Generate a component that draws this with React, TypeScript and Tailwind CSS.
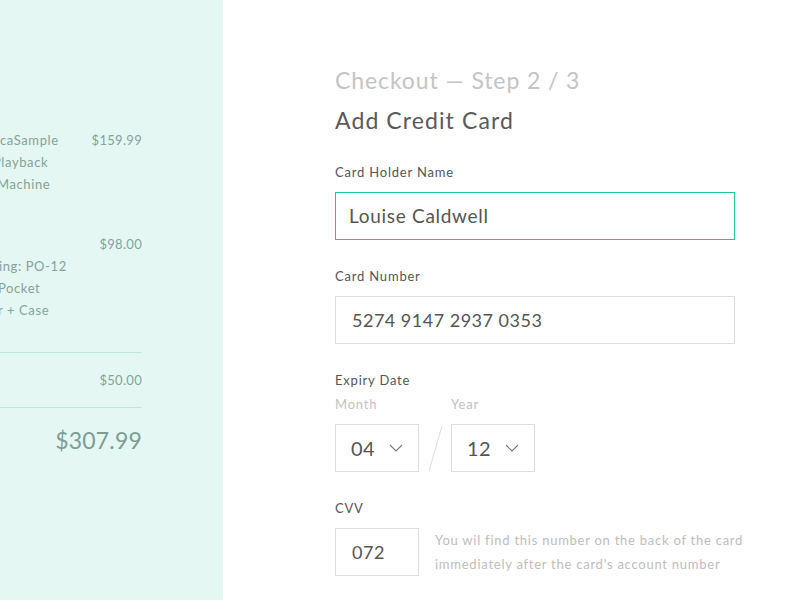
import React from "react";

const font = { fontFamily: "Lato, 'Open Sans', sans-serif" };

const Chevron = () => (
  <svg width="14" height="8" viewBox="0 0 14 8" fill="none">
    <polyline points="1,1 7,7 13,1" stroke="#7a7a7a" strokeWidth="1.1" />
  </svg>
);

const Select = ({ value }: { value: string }) => (
  <div className="flex h-12 w-[84px] items-center justify-between border border-[#dedede] pl-[15px] pr-[15px] text-[20px] tracking-[0.5px] text-[#555]">
    <span>{value}</span>
    <Chevron />
  </div>
);

const App = () => {
  return (
    <div className="flex h-screen w-full bg-white" style={font}>
      <aside className="w-[223px] shrink-0 overflow-hidden bg-[#e4f7f2] pr-[81px] pt-[129px] text-[13px] leading-[22px] tracking-[0.3px] text-[#84a39a]">
        <div className="flex justify-between">
          <div className="tracking-[0.6px]">
            <div className="whitespace-nowrap">caSample</div>
            <div className="-ml-[7px] whitespace-nowrap">Playback</div>
            <div className="-ml-[3px] whitespace-nowrap">Machine</div>
          </div>
          <span>$159.99</span>
        </div>
        <div className="mt-[38px] flex justify-between">
          <div className="tracking-[0.6px]">
            <div className="h-[22px]" />
            <div className="-ml-[1px] whitespace-nowrap">ing: PO-12</div>
            <div className="-ml-[2px] whitespace-nowrap">Pocket</div>
            <div className="-ml-[2px] whitespace-nowrap">r + Case</div>
          </div>
          <span>$98.00</span>
        </div>
        <div className="mt-[31px] border-t border-[#bfe5da] py-4 text-right">$50.00</div>
        <div className="border-t border-[#bfe5da] pt-[18px] text-right text-[23px] leading-[28px] tracking-[0.2px] text-[#7c9d93]">
          $307.99
        </div>
      </aside>

      <main className="flex-1 pl-[112px] pt-[66px] tracking-[0.8px]">
        <h2 className="text-[23px] leading-[28px] tracking-[0.9px] text-[#c4c4c4]">Checkout — Step 2 / 3</h2>
        <h1 className="mt-3 text-[23px] leading-[28px] tracking-[1.1px] text-[#5a5a5a]">Add Credit Card</h1>

        <label className="mt-7 block text-[13px] leading-5 text-[#555]">Card Holder Name</label>
        <div className="mt-[10px] flex h-12 w-[400px] items-center border border-[#1ec7a2] px-[13px] text-[19px] tracking-[0.7px] text-[#555]">
          Louise Caldwell
        </div>

        <label className="mt-[26px] block text-[13px] leading-5 text-[#555]">Card Number</label>
        <div className="mt-[10px] flex h-12 w-[400px] items-center border border-[#dedede] px-4 text-[18px] tracking-[0.5px] text-[#555]">
          5274 9147 2937 0353
        </div>

        <label className="mt-[26px] block text-[13px] leading-5 text-[#555]">Expiry Date</label>
        <div className="mt-1 flex text-[13px] leading-5 text-[#c2c2c2]">
          <span className="w-[116px]">Month</span>
          <span>Year</span>
        </div>
        <div className="mt-[10px] flex items-center">
          <Select value="04" />
          <svg width="32" height="48" viewBox="0 0 32 48">
            <line x1="23" y1="2" x2="10" y2="47" stroke="#dedede" strokeWidth="1" />
          </svg>
          <Select value="12" />
        </div>

        <label className="mt-[26px] block text-[13px] leading-5 text-[#555]">CVV</label>
        <div className="mt-[10px] flex items-start">
          <div className="flex h-12 w-[84px] shrink-0 items-center border border-[#dedede] px-4 text-[18px] tracking-[0.5px] text-[#555]">
            072
          </div>
          <p className="ml-[16px] whitespace-nowrap text-[13px] leading-6 tracking-[0.75px] text-[#bdbdbd]">
            You wil find this number on the back of the card
            <br />
            immediately after the card's account number
          </p>
        </div>
      </main>
    </div>
  );
};

export default App;
